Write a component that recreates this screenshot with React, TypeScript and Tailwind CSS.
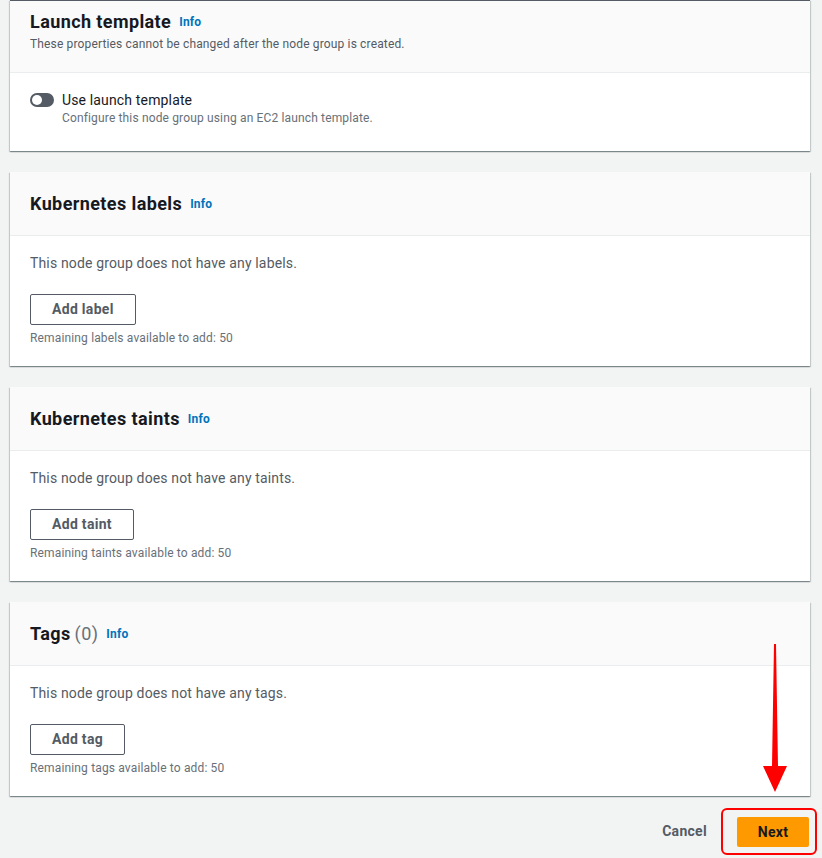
import type { ReactNode } from 'react';

const font = { fontFamily: 'Roboto, "Liberation Sans", Arial, sans-serif' };

function Info() {
  return <span className="ml-2 text-[12px] font-bold tracking-[0.2px] text-[#0073bb]">Info</span>;
}

function Card({ children }: { children: ReactNode }) {
  return (
    <div className="ml-[10px] mr-[12px] bg-white shadow-[0_1px_1px_0_rgba(0,28,36,0.3),1px_1px_1px_0_rgba(0,28,36,0.15),-1px_1px_1px_0_rgba(0,28,36,0.15)]">
      {children}
    </div>
  );
}

function Header({ title, extra }: { title: string; extra?: string }) {
  return (
    <div className="flex h-[64px] items-center border-b border-[#eaeded] bg-[#fafafa] px-5">
      <h2 className="text-[18px] font-bold leading-[22px] tracking-[0.4px] text-[#16191f]">
        {title}
        {extra && <span className="ml-1 font-normal text-[#687078]">{extra}</span>}
      </h2>
      <Info />
    </div>
  );
}

function EmptySection({ title, extra, noun, button }: { title: string; extra?: string; noun: string; button: string }) {
  return (
    <Card>
      <Header title={title} extra={extra} />
      <div className="px-5 pb-5 pt-[17px]">
        <p className="text-[14px] leading-5 tracking-[0.15px] text-[#545b64]">This node group does not have any {noun}.</p>
        <button className="mt-[21px] h-[31px] rounded-[2px] border border-[#545b64] bg-white px-[21px] text-[14px] font-bold tracking-[0.3px] text-[#545b64]">
          {button}
        </button>
        <p className="mt-[5px] text-[12px] leading-4 tracking-[0.15px] text-[#687078]">Remaining {noun} available to add: 50</p>
      </div>
    </Card>
  );
}

export default function App() {
  return (
    <div className="relative min-h-[858px] w-[822px] overflow-hidden bg-[#f2f3f3]" style={font}>
      <div className="flex flex-col gap-[21px]">
        <Card>
          <div className="border-b border-t border-b-[#eaeded] border-t-[#545b64] bg-[#fafafa] px-5 pb-[20px] pt-[10px]">
            <div className="flex items-center">
              <h2 className="text-[18px] font-bold leading-[22px] tracking-[0.4px] text-[#16191f]">Launch template</h2>
              <Info />
            </div>
            <p className="mt-[3px] text-[12px] leading-4 tracking-[0.15px] text-[#545b64]">
              These properties cannot be changed after the node group is created.
            </p>
          </div>
          <div className="px-5 pb-[25px] pt-[17px]">
            <div className="flex items-start gap-2">
              <div className="mt-[3px] flex h-[14px] w-6 items-center rounded-full bg-[#545b64] px-[2px]">
                <div className="h-[10px] w-[10px] rounded-full bg-white" />
              </div>
              <div>
                <div className="text-[14px] leading-5 tracking-[0.15px] text-[#16191f]">Use launch template</div>
                <div className="text-[12px] leading-4 tracking-[0.15px] text-[#687078]">Configure this node group using an EC2 launch template.</div>
              </div>
            </div>
          </div>
        </Card>

        <EmptySection title="Kubernetes labels" noun="labels" button="Add label" />
        <EmptySection title="Kubernetes taints" noun="taints" button="Add taint" />
        <EmptySection title="Tags" extra="(0)" noun="tags" button="Add tag" />
      </div>

      <div className="mt-[12px] flex items-center justify-end gap-[14px] pr-[5px]">
        <span className="text-[14px] font-bold tracking-[0.3px] text-[#545b64]">Cancel</span>
        <div className="rounded-[6px] border-2 border-[#ff0000] pb-[6px] pl-[14px] pr-[6px] pt-[7px]">
          <button className="block h-[30px] w-[72px] rounded-[2px] bg-[#ff9900] text-[14px] font-bold tracking-[0.3px] text-[#16191f]">Next</button>
        </div>
      </div>

      <svg className="absolute left-[760px] top-[642px]" width="30" height="152" viewBox="0 0 30 152">
        <path d="M14 2 L16 2 L18 124 L27 124 L15 150 L3 124 L12 124 Z" fill="#ff0000" />
      </svg>
    </div>
  );
}
